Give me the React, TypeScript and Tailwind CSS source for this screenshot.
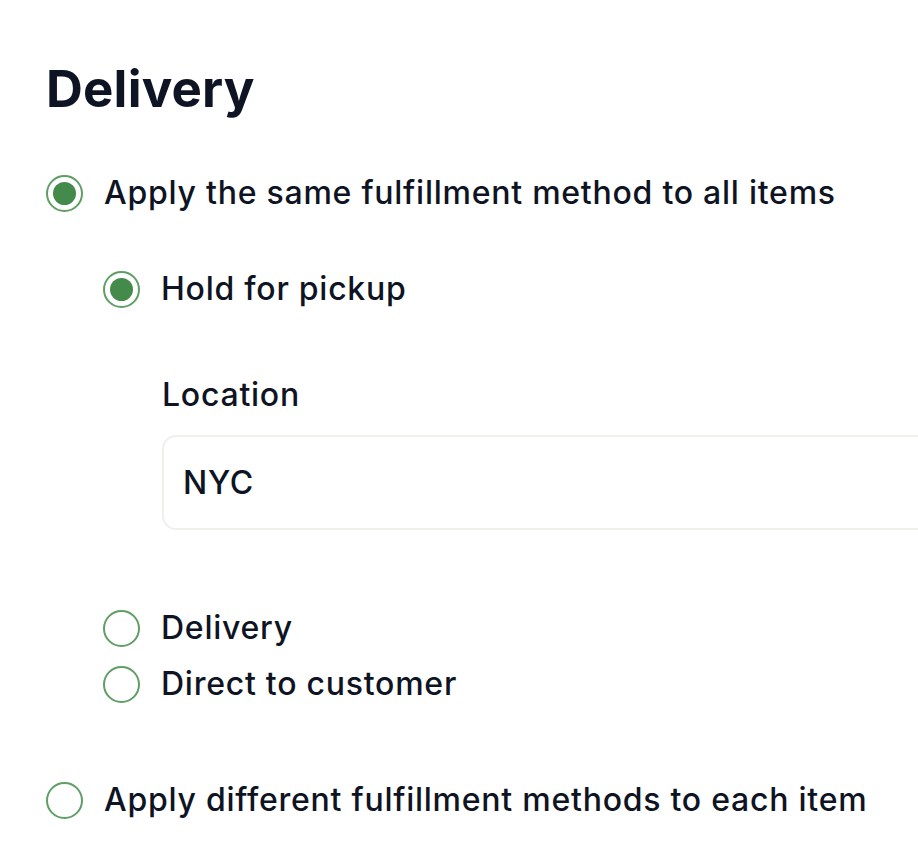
import React from "react";

function Radio({ checked }: { checked?: boolean }) {
  return (
    <span className="flex h-[37px] w-[37px] shrink-0 items-center justify-center rounded-full border-[2px] border-[#5f9e64] bg-white">
      {checked && <span className="h-[23px] w-[23px] rounded-full bg-[#438a4b]" />}
    </span>
  );
}

function Option({ checked, label }: { checked?: boolean; label: string }) {
  return (
    <label className="flex items-center gap-[21px]">
      <Radio checked={checked} />
      <span className="text-[32px] font-medium leading-[40px] tracking-[0.75px] text-[#0e1423]">{label}</span>
    </label>
  );
}

export default function App() {
  return (
    <div
      className="min-h-[856px] w-[918px] overflow-hidden bg-white pl-[46px] pt-[58px]"
      style={{ fontFamily: "Inter, 'Noto Sans', sans-serif" }}
    >
      <h1 className="text-[51px] font-bold leading-[62px] tracking-[0.2px] text-[#0e1423]">Delivery</h1>
      <div className="mt-[53px]">
        <Option checked label="Apply the same fulfillment method to all items" />
      </div>
      <div className="ml-[57px] mt-[56px]">
        <Option checked label="Hold for pickup" />
        <div className="ml-[59px] mt-[66px]">
          <div className="text-[32px] font-medium leading-[40px] tracking-[0.75px] text-[#0e1423]">Location</div>
          <div className="mt-[20px] flex h-[95px] w-[800px] items-center rounded-[14px] border-[2px] border-[#efefec] pl-[19px] text-[32px] font-medium tracking-[0.75px] text-[#0e1423]">
            NYC
          </div>
        </div>
        <div className="mt-[78px] flex flex-col gap-[16px]">
          <Option label="Delivery" />
          <Option label="Direct to customer" />
        </div>
      </div>
      <div className="mt-[76px]">
        <Option label="Apply different fulfillment methods to each item" />
      </div>
    </div>
  );
}
